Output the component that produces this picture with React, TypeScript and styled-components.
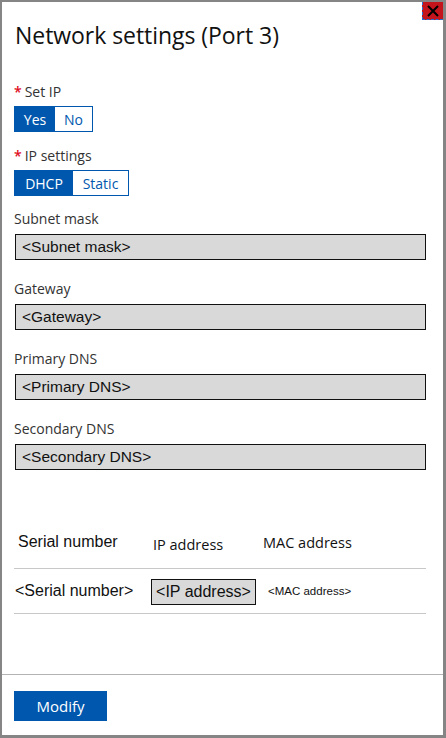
import React from "react";
import styled, { createGlobalStyle } from "styled-components";

const Global = createGlobalStyle`
  html, body { margin: 0; padding: 0; background: #fff; }
  body { font-family: "Open Sans", "Noto Sans", sans-serif; }
  * { box-sizing: border-box; }
`;

const Panel = styled.div`
  position: relative;
  width: 446px;
  height: 738px;
  border-style: solid;
  border-color: #858585;
  border-width: 2px 3px 3px 2px;
  background: #fff;
  display: flex;
  flex-direction: column;
`;

const CloseButton = styled.button`
  position: absolute;
  top: 0;
  right: 0;
  width: 21px;
  height: 18px;
  padding: 0;
  border: none;
  border-left: 1px dashed #1f6fd6;
  border-bottom: 1px dashed #1f6fd6;
  background: #c4141c;
  display: flex;
  align-items: center;
  justify-content: center;
`;

const Body = styled.div`
  flex: 1;
  padding: 17px 17px 0 10px;
  display: flex;
  flex-direction: column;
`;

const Title = styled.h1`
  margin: 0 0 31px 3px;
  font-family: "Open Sans", sans-serif;
  font-weight: 400;
  font-size: 23px;
  line-height: 32px;
  color: #111;
  letter-spacing: -0.05px;
`;

const Field = styled.div<{ gap: number; gapAfter: number }>`
  display: flex;
  flex-direction: column;
  gap: ${(p) => p.gap}px;
  margin-bottom: ${(p) => p.gapAfter}px;
`;

const Label = styled.div`
  font-size: 14px;
  line-height: 20px;
  color: #333;
  padding-left: 2px;
`;

const Required = styled.span`
  color: #e00b1c;
  margin-right: 3px;
  font-weight: 600;
`;

const Toggle = styled.div`
  display: flex;
  align-self: flex-start;
  height: 26px;
  border: 1px solid #0058ae;
  margin-left: 2px;
`;

const Seg = styled.span<{ active?: boolean; w: number }>`
  width: ${(p) => p.w}px;
  display: flex;
  align-items: center;
  justify-content: center;
  font-size: 14px;
  color: ${(p) => (p.active ? "#fff" : "#0058ae")};
  background: ${(p) => (p.active ? "#0058ae" : "#fff")};
`;

const Input = styled.div`
  height: 26px;
  margin-left: 3px;
  border: 1px solid #111;
  background: #d9d9d9;
  font-family: "Liberation Sans", Arial, sans-serif;
  font-size: 15.5px;
  color: #111;
  display: flex;
  align-items: center;
  padding-left: 6px;
`;

const Table = styled.div`
  margin-top: 51px;
  margin-left: 2px;
  display: grid;
  grid-template-columns: 137px 112px 1fr;
`;

const HeadCell = styled.div<{ serif?: boolean; dy?: number; pl: number }>`
  height: 48px;
  display: flex;
  align-items: center;
  padding-left: ${(p) => p.pl}px;
  padding-bottom: ${(p) => 5 - (p.dy ?? 0)}px;
  font-family: ${(p) => (p.serif ? '"Liberation Sans", Arial, sans-serif' : '"Open Sans", sans-serif')};
  font-size: ${(p) => (p.serif ? 16 : 14.5)}px;
  color: #111;
  border-bottom: 1px solid #c8c8c8;
`;

const Cell = styled.div<{ pl: number; small?: boolean }>`
  height: 45px;
  display: flex;
  align-items: center;
  padding-left: ${(p) => p.pl}px;
  font-family: "Liberation Sans", Arial, sans-serif;
  font-size: ${(p) => (p.small ? 11.5 : 16)}px;
  color: #111;
  border-bottom: 1px solid #c8c8c8;
`;

const IpBox = styled.div`
  height: 26px;
  width: 105px;
  margin-top: 2px;
  border: 1px solid #111;
  background: #d9d9d9;
  display: flex;
  align-items: center;
  justify-content: center;
`;

const Footer = styled.div`
  height: 61px;
  border-top: 1px solid #b4b4b4;
  padding: 16px 0 0 12px;
`;

const PrimaryButton = styled.button`
  width: 93px;
  height: 30px;
  border: none;
  background: #0058ae;
  color: #fff;
  font-family: "Open Sans", sans-serif;
  font-size: 15px;
  padding: 0 0 1px;
`;

const fields = [
  ["Subnet mask", "<Subnet mask>"],
  ["Gateway", "<Gateway>"],
  ["Primary DNS", "<Primary DNS>"],
  ["Secondary DNS", "<Secondary DNS>"],
];

export default function App() {
  return (
    <>
      <Global />
      <Panel>
        <CloseButton aria-label="Close">
          <svg width="14" height="14" viewBox="0 0 14 14">
            <path d="M2 2 L12 12 M12 2 L2 12" stroke="#000" strokeWidth="2" />
          </svg>
        </CloseButton>
        <Body>
          <Title>Network settings (Port 3)</Title>
          <Field gap={4} gapAfter={14}>
            <Label>
              <Required>*</Required>Set IP
            </Label>
            <Toggle>
              <Seg active w={40}>Yes</Seg>
              <Seg w={37}>No</Seg>
            </Toggle>
          </Field>
          <Field gap={4} gapAfter={13}>
            <Label>
              <Required>*</Required>IP settings
            </Label>
            <Toggle>
              <Seg active w={58}>DHCP</Seg>
              <Seg w={55}>Static</Seg>
            </Toggle>
          </Field>
          {fields.map(([l, v], i) => (
            <Field key={l} gap={5} gapAfter={i === fields.length - 1 ? 0 : 19}>
              <Label>{l}</Label>
              <Input>{v}</Input>
            </Field>
          ))}
          <Table>
            <HeadCell serif pl={4}>Serial number</HeadCell>
            <HeadCell pl={2} dy={4}>IP address</HeadCell>
            <HeadCell pl={0}>MAC address</HeadCell>
            <Cell pl={1}>&lt;Serial number&gt;</Cell>
            <Cell pl={0}>
              <IpBox>&lt;IP address&gt;</IpBox>
            </Cell>
            <Cell pl={5} small>
              &lt;MAC address&gt;
            </Cell>
          </Table>
        </Body>
        <Footer>
          <PrimaryButton>Modify</PrimaryButton>
        </Footer>
      </Panel>
    </>
  );
}
